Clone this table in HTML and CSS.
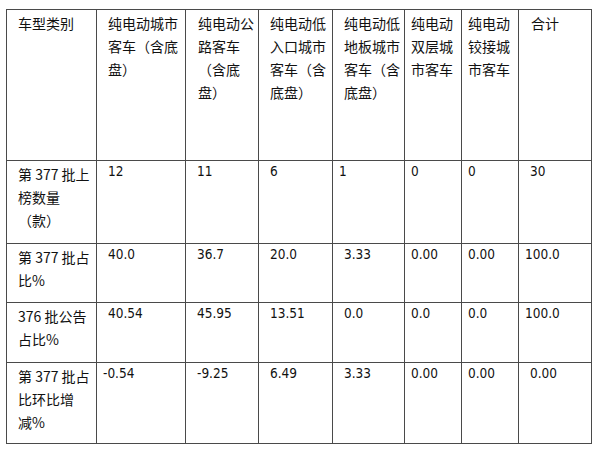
FILE: index.html
```html
<!DOCTYPE html>
<html lang="zh-CN">
<head>
<meta charset="utf-8">
<title>车型类别</title>
<link rel="stylesheet" href="styles.css">
</head>
<body>
<table class="grid">
  <colgroup>
    <col class="c1"><col class="c2"><col class="c3"><col class="c4"><col class="c5"><col class="c6"><col class="c7"><col class="c8">
  </colgroup>
  <tr class="r1">
    <td class="lab">车型类别</td>
    <td class="lab">纯电动城市客车（含底盘）</td>
    <td class="lab p12">纯电动公路客车（含底盘）</td>
    <td class="lab">纯电动低入口城市客车（含底盘）</td>
    <td class="lab">纯电动低地板城市客车（含底盘）</td>
    <td class="lab p6">纯电动双层城市客车</td>
    <td class="lab p6">纯电动铰接城市客车</td>
    <td class="lab p12">合计</td>
  </tr>
  <tr class="r2">
    <td class="lab">第 377 批上榜数量（款）</td>
    <td class="num ind">12</td>
    <td class="num ind">11</td>
    <td class="num ind">6</td>
    <td class="num">1</td>
    <td class="num">0</td>
    <td class="num">0</td>
    <td class="num ind">30</td>
  </tr>
  <tr class="r3">
    <td class="lab">第 377 批占比%</td>
    <td class="num ind">40.0</td>
    <td class="num ind">36.7</td>
    <td class="num ind">20.0</td>
    <td class="num ind">3.33</td>
    <td class="num">0.00</td>
    <td class="num">0.00</td>
    <td class="num">100.0</td>
  </tr>
  <tr class="r4">
    <td class="lab">376 批公告占比%</td>
    <td class="num ind">40.54</td>
    <td class="num ind">45.95</td>
    <td class="num ind">13.51</td>
    <td class="num ind">0.0</td>
    <td class="num">0.0</td>
    <td class="num">0.0</td>
    <td class="num">100.0</td>
  </tr>
  <tr class="r5">
    <td class="lab">第 377 批占比环比增减%</td>
    <td class="num">-0.54</td>
    <td class="num ind">-9.25</td>
    <td class="num ind">6.49</td>
    <td class="num ind">3.33</td>
    <td class="num">0.00</td>
    <td class="num">0.00</td>
    <td class="num ind">0.00</td>
  </tr>
</table>
</body>
</html>
```

FILE: styles.css
```css
html, body {
  margin: 0;
  padding: 0;
  background: #ffffff;
}

body {
  padding: 9px 0 0 6px;
}

.grid {
  border-collapse: collapse;
  table-layout: fixed;
  width: 586px;
  color: #111111;
}

.c1 { width: 90px; }
.c2 { width: 89px; }
.c3 { width: 73px; }
.c4 { width: 74px; }
.c5 { width: 72px; }
.c6 { width: 57px; }
.c7 { width: 57px; }
.c8 { width: 73px; }

.grid td {
  border: 1px solid #4a4a4a;
  vertical-align: top;
  padding: 0 2px 0 11px;
}

.r1 { height: 151px; }
.r2 { height: 83px; }
.r3 { height: 59px; }
.r4 { height: 60px; }
.r5 { height: 81px; }

.lab {
  font-family: "Noto Sans CJK SC", "Noto Sans", sans-serif;
  font-size: 14px;
  line-height: 23px;
  padding-top: 2px !important;
}

.grid td.p6 { padding-left: 6px; }
.grid td.p12 { padding-left: 12px; }

.num {
  font-family: "DejaVu Sans Condensed", "Liberation Sans", sans-serif;
  font-stretch: condensed;
  font-size: 13.5px;
  line-height: 20px;
}

.grid td.num { padding-left: 6px; }
.grid td.num.ind { padding-left: 11px; }
```
